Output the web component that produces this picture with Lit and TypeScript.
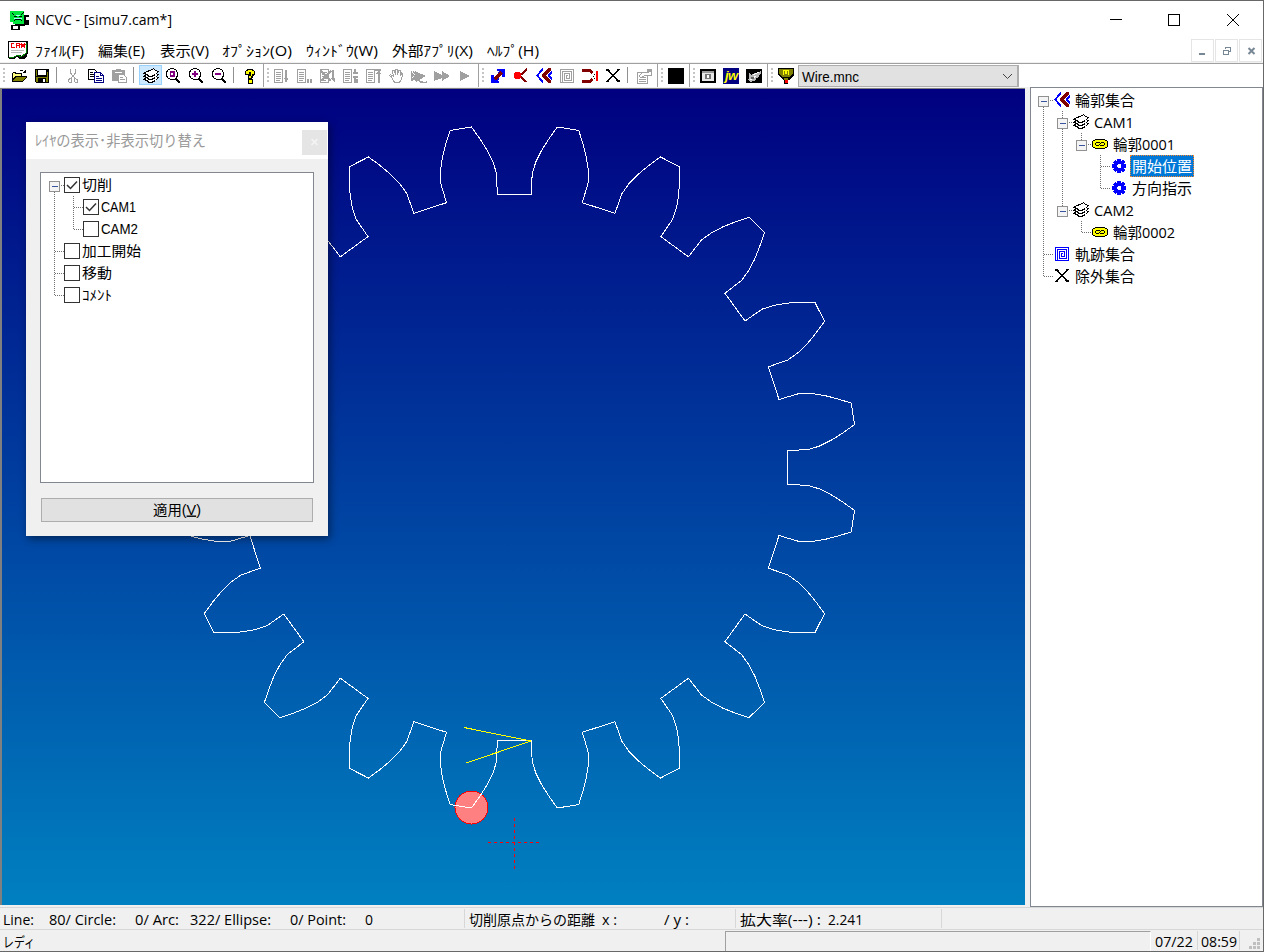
import { LitElement, html, svg, css } from "lit";
import { customElement, state } from "lit/decorators.js";

const UI = "'Open Sans','Noto Sans CJK JP',sans-serif";
const BITMAP = "'Liberation Sans','Noto Sans CJK JP',sans-serif";

// Single line label with a fixed advance width.
const label = (s: string, w: number, size = 15, fill = "#000", font = UI) => html`<svg class="label" width=${w} height="22" style="overflow:visible"><text x="0" y="16.5" textLength=${w} lengthAdjust="spacingAndGlyphs" font-family=${font} font-size=${size} fill=${fill}>${s}</text></svg>`;

type Run = [string, number, number];
const runs = (items: Run[], start = 0, size = 14) => {
  let at = start;
  return items.map(([s, x, w]) => {
    const gap = x - at;
    at = x + w;
    return html`<span class="run" style="margin-left:${gap}px">${label(s, w, size)}</span>`;
  });
};

const p = (d: string, stroke = "#000", w = 1, fill = "none") => svg`<path d=${d} stroke=${stroke} stroke-width=${w} fill=${fill} />`;
const f = (d: string, fill = "#000") => svg`<path d=${d} fill=${fill} />`;
const G = "#a0a0a0";
const lens = svg`${p("M5.5 .5H8.500L11.500 2.500L12.500 5.500V7.500L11.500 9.500L9.500 11.500H5.500L2.500 9.500L1.500 7.500V4.500L2.500 2.500Z", "#000", 1, "#fff")}${p("M11 11L15 15", "#000", 2)}`;
const page = svg`${p("M1.5 1.5H9.5V14.5H1.5Z", G)}${p("M3 4.5H8M3 6.5H8M3 8.5H8M3 10.5H8M3 12.5H7", G)}`;
const spiral = (c: string) => p("M1.5 1.5H14.5V14.5H1.5ZM3.5 14V3.5H12.5V12.5H5.5V5.5H10.5V10.5H7.5V7.5H9", c);

const ICONS: Record<string, unknown> = {
  open: svg`${f("M1 5H2V4H5V5H11V8H16V9L12 14H1Z", "#000")}${f("M2 5H4V6H10V8H4L2 11Z", "#ffff80")}${f("M5 9H15L11 13H2Z", "#808000")}${p("M9 2.5H12M12.5 3.5H14M14.5 2V5M12 4.5H15")}`,
  save: svg`${f("M1 1H15V15H2L1 14Z")}${f("M2 2H3V8H2ZM13 4H14V13H13ZM2 9H14V10H2ZM2 9H4V14H2ZM12 9H14V14H12Z", "#808000")}${f("M4 2H12V7H4Z", "#fff")}${f("M9 11H11V14H9Z", "#fff")}`,
  cut: svg`${p("M5.5 1V5L10.5 11M10.5 1V5L5.5 11", G)}${p("M3.5 11.5L5.5 10.5L6.5 12V14L4.5 14.5L3.5 13ZM9.5 10.5L12.5 11.5V14L10.5 14.5L9.5 13Z", G)}`,
  copy: svg`${p("M.5 1.5H6.5L9.5 4.5V11.5H.5Z", "#000", 1, "#fff")}${p("M2 4.5H5M2 6.5H6M2 8.5H6")}${p("M6.5 4.5H12.5L15.5 7.5V14.5H6.5Z", "#000080", 1, "#fff")}${p("M12.5 5V7.5H15M8 8.5H11M8 10.5H14M8 12.5H14", "#000080")}`,
  paste: svg`${f("M1 2H5V1H10V2H14V13H1Z", G)}${p("M4 4.5H11", "#fff")}${p("M7.5 6.5H12.5L15.5 9.5V14.5H7.5Z", G, 1, "#fff")}${p("M9 9.5H12M9 11.5H14", G)}`,
  layers: svg`${[6, 3, 0].map(y => p(`M.5 ${5.5 + y}L3.500 ${3.5 + y}L7.500 ${2.5 + y}L10.500 ${0.5 + y}L12.500 ${2.5 + y}L15.500 ${3.5 + y}L12.500 ${6.5 + y}L8.500 ${8.5 + y}H5.500L4.500 ${6.5 + y}Z`, "#000", 1, "#fff"))}`,
  zdoc: svg`${lens}${f("M5 3H10V9H5Z", "#800080")}${f("M6 5H8V7H6Z", "#fff")}`,
  zin: svg`${lens}${p("M4 6H10M7 3V9", "#800080", 2)}`,
  zout: svg`${lens}${p("M4 6H10", "#800080", 2)}`,
  help: svg`${f("M4 2H5V1H11V2H12V3H13V7H12V8H11V10H10V11H6V7H8V5H8V7H3V3H4ZM6 11H11V16H6Z")}${f("M4 3H6V2H10V3H12V6H10V8H9V10H7V8H9V4H7V6H4ZM7 12H10V15H7Z", "#ff0")}`,
  s1: svg`${page}${p("M13 2V12", G, 2)}${f("M11 10H15.500L13 15Z", G)}`,
  s2: svg`${page}${f("M10 9H16V15H10Z", "#fff")}${f("M11 11H13V15H11ZM14 11H16V15H14Z", G)}`,
  s3: svg`${page}${p("M2 3L12 13M12 3L2 13", G, 2)}${p("M14 2V12", G, 2)}${f("M11 10H16V15Z", G)}`,
  s4: svg`${page}${p("M13 1V6M11 5H16M13 9V15M11 9H16M15 11V15", G, 2)}`,
  s5: svg`${page}${p("M10 2H16M13.5 3V15", G, 2)}${f("M11 6H16L13.5 2Z", G)}`,
  hand: svg`${p("M3.5 9L1.5 7.5L2.5 6.5L5.5 8.5L4.5 3L6.5 2.5L7.5 7V1.5H9.5V7L10.5 2.5H12.5V8L13.5 5L15 6L13.5 11L11.5 14.5H6.5Z", G)}`,
  f1: svg`${f("M0 3L2 4V3L4 4V3L15 8L9 11.500V13H16V15H9L7 13L5 14L3 12L0 13Z", G)}${p("M1 4L4 7M1 10L3 8M12 13.500H15", "#fff")}`,
  f2: svg`${f("M0 3L8 7V3L16 8L8 13V10L0 13Z", G)}`,
  f3: svg`${f("M3 3L13 8L3 13Z", G)}`,
  arrow: svg`${f("M7 1H15V9H12V6L10 8L7 5L9 3H7ZM1 7H4V9L6 7L9 11L7 13H9V15H1Z", "#00f")}${p("M4.500 11.500L11.500 4.500", "#800000", 3)}`,
  cutin: svg`${p("M14 1L7 7.500L13 14", "#800000", 2)}${svg`<circle cx="4.5" cy="7.5" r="3.8" fill="#f00" />`}`,
  chev: svg`${p("M7 .5L1.5 7.5L7 14.5", "#00f", 1.8)}${f("M16 3V6L14 7.500L16 9.500V13L12 9V6Z", "#00f")}${f("M12 0H15V2L10 7.500L15 13V15H12L6 8V7Z", "#800000")}`,
  spiralG: spiral(G),
  spiralB: spiral("#00f"),
  link: svg`${p("M0 2.5H8L10.500 5M0 13.5H8L10.500 11", "#800000", 3)}${p("M14.5 3V13", "#f00", 2)}${p("M10.500 8.500h1M12.500 6v1M12.500 10v1", "#000")}`,
  x: p("M1 2H3L13 13H15M14 1L2 14", "#000", 1.6),
  prop: svg`${p("M1.5 4.5H11.5V15.5H1.5ZM3 11.5H10M3 13.5H10M7 9.5H10", G)}${p("M3 8L7 4H12V1.5H15.5V7.5H11L8 8L5 10Z", G, 1, "#fff")}${p("M11 2.5H16", G, 3)}`,
  black: f("M0 0H16V16H0Z"),
  term: svg`${f("M0 1H16V15H0Z")}${f("M2 3H14V13H2Z", "#e8e8e8")}${f("M2 3H14V5H2Z", "#999")}${f("M5 6H11V11H5Z", "#777")}${f("M7 7H9V10H7Z", "#fff")}`,
  jw: svg`${f("M0 0H16V16H0Z", "#000080")}<text x="2" y="12" textLength="13" font-family="Liberation Sans" font-style="italic" font-weight="bold" font-size="13" fill="#ff0">jw</text>`,
  wing: svg`${f("M0 1H16V15H0Z")}${f("M3 4L5 7L9 5L15 3V6L13 7V9L10 10V12L4 14L2 12L3 10Z", "#bbb")}${p("M7 7L13 4M4 12L10 8", "#fff")}${f("M5 9H8V11H5Z", "#666")}`,
  machine: svg`${f("M0 0H16V7L11 12H10V16H6V12H5L0 7Z")}${f("M1 1H15V6L11 9H5L1 6Z", "#808000")}${p("M5.5 7V2.5H7.5V5H8.5V2.5H10.5V7", "#ff0")}${f("M6 10H10V12H6Z", "#808000")}${p("M9.5 12.5H7.5V13.5H9.5V14.5H7", "#f00")}`,
  rings: svg`${p("M3.500 3.500H12.500L15.500 5.500V10.500L12.500 12.500H3.500L.5 10.500V5.500Z", "#000", 1, "#ff0")}${p("M8 6.500H4.500L3.500 7.500V8.500L4.500 9.500H6.500L9.500 6.500H11.500L12.500 7.500V8.500L11.500 9.500H8")}`,
  gear: svg`${f("M6 1H10V3L12 2L14 4L13 6H15V10H13L14 12L12 14L10 13V15H6V13L4 14L2 12L3 10H1V6H3L2 4L4 2L6 3Z", "#00f")}${f("M7 6H9L10 7V9L9 10H7L6 9V7Z", "#fff")}`,
  app: svg`${f("M6 13H14V5H20V15H16V16H11V20H2V15H6Z")}${f("M1 1H15V14H4V12H1Z", "#00e53c")}${f("M2 15H10V19H2Z", "#000")}${f("M4 16H9V19H4ZM17 7H20V10H17Z", "#fff")}${p("M3 3L5 5M12 5L15 2M5 6H8M10 6H13M5 11L7 9H11L13 11", "#000")}${p("M5 8.5H13M7 5.5H11", "#a0ffff")}`,
  cam: svg`${f("M0 1H20V14H19V16L17 19H12L9 17L6 19H1L0 18Z")}${f("M1 2H18V14L14 16L11 15L8 16L4 17H1Z", "#fff")}${p("M1 17.500L6 17L10 15L13 17L18 13V3", "#008000")}${p("M6 3.5H3.5V7.5H7M8.5 8V3.5H11.5V8M9 5.5H11M13.5 8V3M13 4L15 6L17 4M16.5 3V8", "#e00", 1.7)}${p("M3 10.5H16M3 12.5H14", "#bbb")}`,
};
const icon = (n: string, size = 16) => html`<svg class="icon" width=${size} height=${size} viewBox="0 0 ${size} ${size}" shape-rendering="crispEdges">${ICONS[n]}</svg>`;

const MENU: Run[] = [["ﾌｧｲﾙ(F)", 35, 49], ["編集(E)", 98, 47], ["表示(V)", 160, 49], ["ｵﾌﾟｼｮﾝ(O)", 222, 70], ["ｳｨﾝﾄﾞｳ(W)", 306, 72], ["外部ｱﾌﾟﾘ(X)", 392, 81], ["ﾍﾙﾌﾟ(H)", 487, 52]];
const BANDS: { pad: number; tail: number; items: string[] }[] = [
  { pad: 7, tail: 2, items: ["open", "save", "|", "cut", "copy", "paste", "|", "*layers", "zdoc", "zin", "zout", "|", "help"] },
  { pad: 5, tail: 2, items: ["s1", "s2", "s3", "s4", "s5", "hand", "f1", "f2", "f3"] },
  { pad: 7, tail: 2, items: ["arrow", "cutin", "chev", "spiralG", "link", "x", "|", "prop"] },
  { pad: 6, tail: 2, items: ["black"] },
  { pad: 6, tail: 2, items: ["term", "jw", "wing"] },
  { pad: 6, tail: 0, items: ["machine"] },
];

// guides: one mark per depth; I = passing line, L = last child, T = child, _ = blank, R = root
type Node = { g: string; exp?: boolean; icon?: string; s: string; w: number; sel?: boolean; on?: boolean };
const TREE: Node[] = [
  { g: "R", exp: true, icon: "chev", s: "輪郭集合", w: 60 },
  { g: "IT", exp: true, icon: "layers", s: "CAM1", w: 40 },
  { g: "IIL", exp: true, icon: "rings", s: "輪郭0001", w: 62 },
  { g: "II_T", icon: "gear", s: "開始位置", w: 60, sel: true },
  { g: "II_L", icon: "gear", s: "方向指示", w: 60 },
  { g: "IL", exp: true, icon: "layers", s: "CAM2", w: 40 },
  { g: "I_L", icon: "rings", s: "輪郭0002", w: 62 },
  { g: "T", icon: "spiralB", s: "軌跡集合", w: 60 },
  { g: "L", icon: "x", s: "除外集合", w: 60 },
];
const dots = (d: string) => svg`<path d=${d} stroke="#707070" stroke-dasharray="1 1" />`;
const guides = (n: Node, trim: number) => {
  const w = n.g.length * 19 - 3;
  return html`<svg class="guides" width=${w - trim} height="22" shape-rendering="crispEdges">
    ${[...n.g].map((c, i) => {
      if (c === "_") return "";
      const x = i * 19 + 5.5;
      return svg`${dots(`M${x} ${c === "R" ? 12 : 0}V${c === "L" ? 12 : 22}`)}${c === "I" ? "" : dots(`M${x} 11.5H${w}`)}`;
    })}
    ${n.exp ? svg`<rect x=${w - 15.5} y="7.5" width="10" height="10" rx="1" fill="#f4f4f4" stroke="#919191" /><path d="M${w - 13} 12.5h6" stroke="#3a55a0" />` : ""}
  </svg>`;
};

// Gear outline built from one tooth gap repeated around the centre.
const TEETH = 20;
const SQUEEZE = 0.9975;
const flank = [[43, 341], [34.5, 329], [27.5, 318], [21.5, 306], [17.7, 294], [17.2, 273.3]];
const gap = [...flank.map(([x, y]) => [-x, y]), ...[...flank].reverse()];
const gearPath = (cx: number, cy: number) => {
  const pts: string[] = [];
  for (let k = 0; k < TEETH; k++) {
    const a = (-k * 2 * Math.PI) / TEETH;
    const c = Math.cos(a), s = Math.sin(a);
    for (const [x, y] of gap)
      pts.push(`${(cx + SQUEEZE * (x * c - y * s)).toFixed(1)} ${(cy + 0.9985 * (x * s + y * c)).toFixed(1)}`);
  }
  return "M" + pts.join("L") + "Z";
};

@customElement("app-root")
export class AppRoot extends LitElement {
  @state() private layers: Node[] = [
    { g: "R", exp: true, s: "切削", w: 30, on: true },
    { g: "IT", s: "CAM1", w: 35, on: true },
    { g: "IL", s: "CAM2", w: 37 },
    { g: "T", s: "加工開始", w: 59 },
    { g: "T", s: "移動", w: 30 },
    { g: "L", s: "ｺﾒﾝﾄ", w: 30 },
  ];

  static styles = css`
    :host { display: flex; flex-direction: column; box-sizing: border-box; width: 1264px; height: 952px; background: #fff; border: 1px solid #686868; border-width: 1px 1px 1px 0; overflow: hidden; position: relative; }
    svg { display: block; flex: none; }
    .run { display: block; flex: none; }
    .title { display: flex; height: 37px; align-items: center; padding-left: 9px; flex: none; }
    .title .icon { margin-right: 6px; }
    .title .label { margin-top: -1px; }
    .caps { margin-left: auto; }
    .menu { display: flex; height: 24px; align-items: center; padding-left: 8px; flex: none; }
    .menu .label { margin-top: -1px; }
    .menu .icon { margin-top: -1px; }
    .mdi { display: flex; margin-left: auto; gap: 1px; align-self: flex-end; padding-right: 1px; }
    .mdi svg { box-sizing: border-box; border: 1px solid #e5e5e5; }
    .tools { display: flex; height: 23px; margin-top: 1px; border-top: 1px solid #a0a0a0; flex: none; box-shadow: 0 -1px #f0f0f0; }
    .band { display: flex; border-right: 1px solid #a0a0a0; }
    .band:nth-last-child(2) { border: 0; }
    .grip { display: flex; flex-direction: column; gap: 2px; padding: 4px 0 0 3px; box-sizing: border-box; }
    .grip i { width: 2px; height: 2px; background: #c4c4c4; }
    .tool { box-sizing: border-box; width: 23px; height: 20px; padding: 3px 0 0 4px; margin-top: 1px; }
    .tool.on { background: #cce8ff; border: 1px solid #99d1ff; padding: 2px 0 0 3px; margin: 1px -1px 0 1px; }
    .sep { width: 1px; height: 16px; background: #909090; margin: 3px 4px 0 3px; }
    .combo { display: flex; justify-content: space-between; box-sizing: border-box; width: 221px; height: 22px; margin: 1px 0 0 1px; background: #e1e1e1; border: 1px solid #adadad; border-right-width: 2px; padding-left: 3px; }
    .combo .label { margin-top: -1px; }
    .main { display: flex; height: 820px; background: #f0f0f0; flex: none; gap: 5px; }
    .canvas { box-sizing: border-box; width: 1025px; height: 817px; margin-top: 1px; border: solid #808080; border-width: 1px 0 0 2px; background: linear-gradient(#000080, #0080c0); }
    .tree { box-sizing: border-box; width: 233px; height: 820px; background: #fff; border: 1px solid #828790; padding: 1px 0 0 7px; }
    .node { display: flex; height: 22px; align-items: center; }
    .name { display: block; margin-left: 3px; padding: 0 2px; height: 22px; }
    .name.sel { background: #0078d7; outline: 1px dotted #ff8728; outline-offset: -1px; }
    .status { display: flex; box-sizing: border-box; height: 22px; border-top: 1px solid #d7d7d7; background: #f0f0f0; flex: none; align-items: center; }
    .pane { display: flex; box-sizing: border-box; height: 19px; align-items: center; border-right: 1px solid #d7d7d7; }
    .p1 { width: 465px; } .p2 { width: 271px; } .p3 { width: 206px; } .p4 { width: 725px; border: 0; }
    .p5 { width: 426px; height: 20px; border: 1px solid #a0a0a0; border-right-color: #fff; border-bottom: 0; }
    .p6 { width: 47px; } .p7 { width: 42px; }
    .corner { margin: 6px 2px 0 auto; }
    .dialog { position: absolute; left: 26px; top: 121px; width: 302px; height: 414px; background: #f0f0f0; box-shadow: 2px 3px 8px rgba(0,0,0,.45); }
    .dhead { display: flex; justify-content: space-between; height: 37px; background: #fff; padding-left: 9px; }
    .dhead > svg.label { margin-top: 7px; }
    .dx { width: 25px; height: 25px; margin: 8px 1px 0 0; background: #e5e5e5; }
    .list { box-sizing: border-box; width: 274px; height: 311px; margin: 13px 0 0 14px; background: #fff; border: 1px solid #828790; padding: 1px 0 0 8px; }
    .list .name { margin-left: 0; }
    .list .node .label { margin-top: -1px; }
    .apply { display: flex; justify-content: center; box-sizing: border-box; width: 272px; height: 24px; margin: 15px 0 0 15px; background: #e1e1e1; border: 1px solid #adadad; padding: 0; }
  `;

  private toggle(i: number) {
    this.layers = this.layers.map((n, k) => (k === i ? { ...n, on: !n.on } : n));
  }

  render() {
    return html`
      <div class="title">${icon("app", 20)}${label("NCVC - [simu7.cam*]", 137, 15)}
        <svg class="caps" width="161" height="36" shape-rendering="crispEdges"><path d="M8 17.500h12M66.500 12.500h11v11h-11z" fill="none" stroke="#000" /><path d="M125 12l12 12M137 12l-12 12" stroke="#000" shape-rendering="auto" /></svg>
      </div>
      <div class="menu">${icon("cam", 20)}${runs(MENU, 28, 14)}
        <div class="mdi">
          <svg width="23" height="23"><path d="M7 14h6" stroke="#788796" stroke-width="2" /></svg>
          <svg width="23" height="23" shape-rendering="crispEdges"><path d="M7.500 10.500h5v4h-5zM9.500 9V7.500h5v4H13M7 10h6M9 7h6" fill="none" stroke="#788796" /></svg>
          <svg width="23" height="23"><path d="M8.500 8l6 6M14.500 8l-6 6" stroke="#788796" stroke-width="2" /></svg>
        </div>
      </div>
      <div class="tools">
        ${BANDS.map(b => html`<div class="band" style="padding-right:${b.tail}px">
          <div class="grip" style="width:${b.pad}px"><i></i><i></i><i></i><i></i></div>
          ${b.items.map(n => n === "|" ? html`<div class="sep"></div>` : html`<div class="tool ${n[0] === "*" ? "on" : ""}">${icon(n.replace("*", ""))}</div>`)}
        </div>`)}
        <div class="combo">${label("Wire.mnc", 57, 14, "#000", BITMAP)}<svg width="18" height="20"><path d="M4 8l4.500 4.500L13 8" fill="none" stroke="#444" /></svg></div>
      </div>
      <div class="main">
        <div class="canvas">
          <svg width="1023" height="816" viewBox="2 89 1023 816" shape-rendering="crispEdges">
            <circle cx="471.500" cy="807.500" r="16.500" fill="#ff8080" stroke="#f00" />
            <path d=${gearPath(514.4, 467.5)} fill="none" stroke="#fff" />
            <path d="M464 727.500L531 741L466 763" fill="none" stroke="#ff0" />
            <path d="M488 842.500H540M514.500 818V870" stroke="#f00" stroke-dasharray="3 3" />
          </svg>
        </div>
        <div class="tree">${TREE.map(n => html`<div class="node">${guides(n, 0)}${icon(n.icon!)}<span class="name ${n.sel ? "sel" : ""}">${label(n.s, n.w, 15, n.sel ? "#fff" : "#000")}</span></div>`)}</div>
      </div>
      <div class="status">
        <div class="pane p1">${runs([["Line:", 3, 31], ["80/ Circle:", 49, 67], ["0/ Arc:", 135, 44], ["322/ Ellipse:", 190, 81], ["0/ Point:", 290, 56], ["0", 365, 8]])}</div>
        <div class="pane p2">${runs([["切削原点からの距離", 4, 126], ["x :", 137, 15], ["/ y :", 199, 25]])}</div>
        <div class="pane p3">${runs([["拡大率(---) :", 4, 81], ["2.241", 92, 35]])}</div>
      </div>
      <div class="status">
        <div class="pane p4">${runs([["レディ", 3, 32]])}</div>
        <div class="pane p5"></div>
        <div class="pane p6">${runs([["07/22", 4, 38]])}</div>
        <div class="pane p7">${runs([["08:59", 3, 36]])}</div>
        <svg class="corner" width="12" height="12"><path d="M8 0h3v3h-3zM4 4h3v3h-3zM8 4h3v3h-3zM0 8h3v3h-3zM4 8h3v3h-3zM8 8h3v3h-3z" fill="#bfbfbf" /></svg>
      </div>
      <div class="dialog">
        <div class="dhead">${label("ﾚｲﾔの表示･非表示切り替え", 171, 14.5, "#999")}<svg class="dx" viewBox="0 0 25 25"><path d="M9.500 9l6 6M15.500 9l-6 6" stroke="#f4f4f4" stroke-width="1.500" /></svg></div>
        <div class="list">${this.layers.map((n, i) => html`<div class="node" @click=${() => this.toggle(i)}>${guides(n, 1)}
          <svg width="16" height="16"><rect x=".5" y=".5" width="15" height="15" fill="#fff" stroke="#333" />${n.on ? svg`<path d="M3 8l3.500 3.500L13 4.500" fill="none" stroke="#333" stroke-width="1.500" />` : ""}</svg>
          <span class="name">${label(n.s, n.w, 14, "#000", BITMAP)}</span></div>`)}</div>
        <button class="apply"><svg class="label" width="49" height="22"><text x="0" y="15.500" textLength="48" lengthAdjust="spacingAndGlyphs" font-family=${BITMAP} font-size="14">適用(<tspan text-decoration="underline">V</tspan>)</text></svg></button>
      </div>`;
  }
}
